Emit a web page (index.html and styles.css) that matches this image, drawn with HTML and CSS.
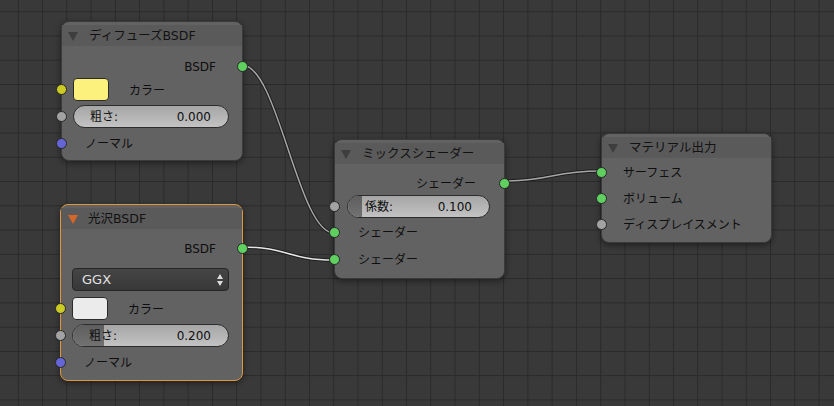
FILE: index.html
```html
<!DOCTYPE html>
<html lang="ja">
<head>
<meta charset="utf-8">
<title>Node Editor</title>
<link rel="stylesheet" href="styles.css">
</head>
<body>
<div class="canvas">
  <svg class="links" width="834" height="406" viewBox="0 0 834 406">
    <path class="link-bg" d="M242 65 C 278 65, 298 233, 334 233"/>
    <path class="link-fg" d="M242 65 C 278 65, 298 233, 334 233"/>
    <path class="link-bg" d="M242 247 C 288 247, 288 260, 334 260"/>
    <path class="link-fg bright" d="M242 247 C 288 247, 288 260, 334 260"/>
    <path class="link-bg" d="M504 181 C 552 181, 552 171, 601 171"/>
    <path class="link-fg" d="M504 181 C 552 181, 552 171, 601 171"/>
  </svg>

  <div class="node n-diffuse">
    <div class="header"><span class="tri"></span><span class="title">ディフューズBSDF</span></div>
    <div class="body b-diffuse">
      <div class="row out"><span class="label">BSDF</span><span class="sock right green"></span></div>
      <div class="row field"><span class="sock left yellow"></span><span class="swatch yellow-sw"></span><span class="label swatch-label">カラー</span></div>
      <div class="row field gap4"><span class="sock left gray"></span><div class="slider"><span class="s-label">粗さ:</span><span class="s-val">0.000</span></div></div>
      <div class="row in normal"><span class="sock left blue"></span><span class="label">ノーマル</span></div>
    </div>
  </div>

  <div class="node n-glossy active">
    <div class="header"><span class="tri orange"></span><span class="title">光沢BSDF</span></div>
    <div class="body b-glossy">
      <div class="row out"><span class="label">BSDF</span><span class="sock right green"></span></div>
      <div class="row field dd-row"><div class="dropdown"><span>GGX</span><span class="arrows"><span class="up"></span><span class="down"></span></span></div></div>
      <div class="row field sw-row"><span class="sock left yellow"></span><span class="swatch white-sw"></span><span class="label swatch-label">カラー</span></div>
      <div class="row field gap4"><span class="sock left gray"></span><div class="slider"><div class="fill" style="width:20%"></div><span class="s-label">粗さ:</span><span class="s-val">0.200</span></div></div>
      <div class="row in normal"><span class="sock left blue"></span><span class="label">ノーマル</span></div>
    </div>
  </div>

  <div class="node n-mix">
    <div class="header"><span class="tri"></span><span class="title">ミックスシェーダー</span></div>
    <div class="body b-mix">
      <div class="row out"><span class="label">シェーダー</span><span class="sock right green"></span></div>
      <div class="row field mix-slider"><span class="sock left gray"></span><div class="slider"><div class="fill" style="width:10%"></div><span class="s-label">係数:</span><span class="s-val">0.100</span></div></div>
      <div class="row in"><span class="sock left green"></span><span class="label">シェーダー</span></div>
      <div class="row in gap3"><span class="sock left green"></span><span class="label">シェーダー</span></div>
    </div>
  </div>

  <div class="node n-output">
    <div class="header"><span class="tri"></span><span class="title">マテリアル出力</span></div>
    <div class="body b-output">
      <div class="row in tall"><span class="sock left green"></span><span class="label">サーフェス</span></div>
      <div class="row in tall"><span class="sock left green"></span><span class="label">ボリューム</span></div>
      <div class="row in tall"><span class="sock left gray"></span><span class="label">ディスプレイスメント</span></div>
    </div>
  </div>
</div>
</body>
</html>
```

FILE: styles.css
```css
* { box-sizing: border-box; }
html, body { margin: 0; padding: 0; }
body {
  width: 834px;
  height: 406px;
  overflow: hidden;
  font-family: "DejaVu Sans", "Noto Sans CJK JP", sans-serif;
  font-size: 12px;
  color: #0e0e0e;
}
.canvas {
  position: relative;
  width: 834px;
  height: 406px;
  background-color: #393939;
  background-image:
    linear-gradient(to right, #2a2a2a 0, #2a2a2a 1.2px, transparent 1.2px),
    linear-gradient(to bottom, #2a2a2a 0, #2a2a2a 1.2px, transparent 1.2px);
  background-size: 24.27px 24.27px;
  background-position: 17.8px 11.2px;
}
.links {
  position: absolute;
  left: 0;
  top: 0;
  z-index: 1;
}
.link-bg { fill: none; stroke: #1e1e1e; stroke-width: 3.4; }
.link-fg { fill: none; stroke: #a6a6a6; stroke-width: 1.5; }
.link-fg.bright { stroke: #e6e6e6; }

.node {
  position: absolute;
  z-index: 2;
  background: #626262;
  border: 1px solid #3a3a3a;
  border-radius: 8px;
  box-shadow: 0 2px 6px rgba(0,0,0,0.45);
  display: flex;
  flex-direction: column;
  padding-top: 3px;
}
.node.active { border-color: #e0963a; }
.n-diffuse { left: 61px; top: 21px; width: 182px; height: 140px; }
.n-glossy { left: 60px; top: 204px; width: 183px; height: 177px; }
.n-mix { left: 334px; top: 139px; width: 171px; height: 140px; }
.n-output { left: 601px; top: 133px; width: 171px; height: 110px; }

.header {
  height: 21px;
  flex: none;
  display: flex;
  align-items: center;
  background: #5a5a5a;
  padding-left: 6px;
}
.tri {
  width: 0;
  height: 0;
  border-left: 5px solid transparent;
  border-right: 5px solid transparent;
  border-top: 9px solid #3e3e3e;
  margin-right: 11px;
  margin-top: 1px;
}
.tri.orange { border-top-color: #d4662a; margin-left: 1px; margin-right: 10px; }
.title { color: #121212; line-height: 1; font-size: 12.5px; padding-top: 1px; }

.body { position: relative; display: flex; flex-direction: column; padding: 0 13px 0 11px; }
.b-diffuse { padding-top: 8px; }
.b-glossy { padding-top: 7px; }
.b-mix { padding-top: 7px; padding-left: 12px; padding-right: 14px; }
.b-output { padding-top: 1px; }

.row {
  position: relative;
  display: flex;
  align-items: center;
  height: 24px;
}
.row.out { justify-content: flex-end; padding-right: 13px; }
.row.field { height: 23px; }
.row.in { padding-left: 12px; }
.row.normal { margin-top: 3px; }
.row.gap4 { margin-top: 4px; }
.row.gap3 { margin-top: 3px; }
.row.dd-row { margin-top: 8px; }
.row.sw-row { margin-top: 6px; }
.row.mix-slider { margin-top: 0; }
.row.tall { height: 26px; padding-left: 10px; }
.b-mix .row.in { padding-left: 11px; margin-top: 2px; }
.b-mix .row.in.gap3 { margin-top: 3px; }
.b-mix .row.out { padding-right: 14px; }

.label { line-height: 1; white-space: nowrap; padding-top: 2px; }
.swatch-label { margin-left: 20px; }

.sock {
  position: absolute;
  width: 11px;
  height: 11px;
  border-radius: 50%;
  border: 1px solid #262626;
  top: 50%;
  margin-top: -5.5px;
}
.sock.left { left: -17px; }
.b-mix .sock.left { left: -18px; }
.b-output .sock.left { left: -17px; }
.sock.right { right: -19px; }
.b-mix .sock.right { right: -20px; }
.green { background: #5fd05f; }
.yellow { background: #cbcb25; }
.gray { background: #a3a3a3; }
.blue { background: #6565d8; }

.swatch {
  width: 36px;
  height: 23px;
  border: 1px solid #2b2b2b;
  border-radius: 4px;
  flex: none;
}
.yellow-sw { background: #fdf17d; }
.white-sw { background: #ebebeb; }

.slider {
  position: relative;
  flex: 1;
  height: 23px;
  border: 1px solid #2c2c2c;
  border-radius: 12px;
  background: linear-gradient(to bottom, #a6a6a6, #c3c3c3);
  display: flex;
  align-items: center;
  justify-content: space-between;
  padding: 0 17px 0 16px;
  overflow: hidden;
}
.fill {
  position: absolute;
  left: 0;
  top: 0;
  bottom: 0;
  background: linear-gradient(to bottom, #5e5e5e, #727272);
}
.s-label, .s-val { position: relative; line-height: 1; padding-top: 1px; }
.b-mix .slider { padding-left: 17px; padding-right: 17px; }

.dropdown {
  flex: 1;
  height: 23px;
  border: 1px solid #262626;
  border-radius: 4px;
  background: linear-gradient(to bottom, #454545, #383838);
  color: #e2e2e2;
  display: flex;
  align-items: center;
  justify-content: space-between;
  padding: 0 5px 0 9px;
  font-size: 13px;
}
.arrows {
  display: flex;
  flex-direction: column;
  gap: 2px;
}
.arrows .up {
  width: 0; height: 0;
  border-left: 3.5px solid transparent;
  border-right: 3.5px solid transparent;
  border-bottom: 5px solid #dcdcdc;
}
.arrows .down {
  width: 0; height: 0;
  border-left: 3.5px solid transparent;
  border-right: 3.5px solid transparent;
  border-top: 5px solid #dcdcdc;
}
```
